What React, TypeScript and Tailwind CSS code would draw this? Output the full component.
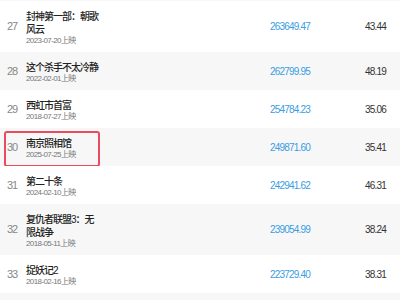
const rows = [
  { rank: 27, title: "封神第一部：朝歌风云", date: "2023-07-20上映", box: "263649.47", rate: "43.44" },
  { rank: 28, title: "这个杀手不太冷静", date: "2022-02-01上映", box: "262799.95", rate: "48.19" },
  { rank: 29, title: "西虹市首富", date: "2018-07-27上映", box: "254784.23", rate: "35.06" },
  { rank: 30, title: "南京照相馆", date: "2025-07-25上映", box: "249871.60", rate: "35.41", highlight: true },
  { rank: 31, title: "第二十条", date: "2024-02-10上映", box: "242941.62", rate: "46.31" },
  { rank: 32, title: "复仇者联盟3：无限战争", date: "2018-05-11上映", box: "239054.99", rate: "38.24" },
  { rank: 33, title: "捉妖记2", date: "2018-02-16上映", box: "223729.40", rate: "38.31" },
];

export default function App() {
  return (
    <div
      className="w-[400px] h-[300px] overflow-hidden bg-white"
      style={{ fontFamily: '"Liberation Sans", "Noto Sans CJK SC", sans-serif' }}
    >
      <div className="h-px bg-[#f7f7f7]" />
      {rows.map((r, i) => (
        <div
          key={r.rank}
          className={
            "relative grid grid-cols-[26px_244px_95px_1fr] items-center " +
            (i % 2 === 1 ? "bg-[#f7f7f7]" : "bg-white")
          }
        >
          <div className="pl-[7px] text-[11px] tracking-[-1px] text-[#888]">{r.rank}</div>
          <div className="pt-[9px] pb-[7px]">
            <div className="w-[75px] text-[10px] leading-[13px] tracking-[-1px] font-medium text-[#222]">{r.title}</div>
            <div className="text-[8px] leading-[9px] tracking-[-0.6px] text-[#777] whitespace-nowrap">{r.date}</div>
          </div>
          <div className="text-[10px] tracking-[-0.8px] text-[#3a9de2]">{r.box}</div>
          <div className="text-[10px] tracking-[-0.8px] text-[#333]">{r.rate}</div>
          {r.highlight && (
            <div className="absolute left-[4px] top-[3px] w-[96px] h-[36px] border-2 border-[#ec4a5f] rounded-[3px]" />
          )}
        </div>
      ))}
      <div className="h-[38px] bg-[#f7f7f7]" />
    </div>
  );
}
